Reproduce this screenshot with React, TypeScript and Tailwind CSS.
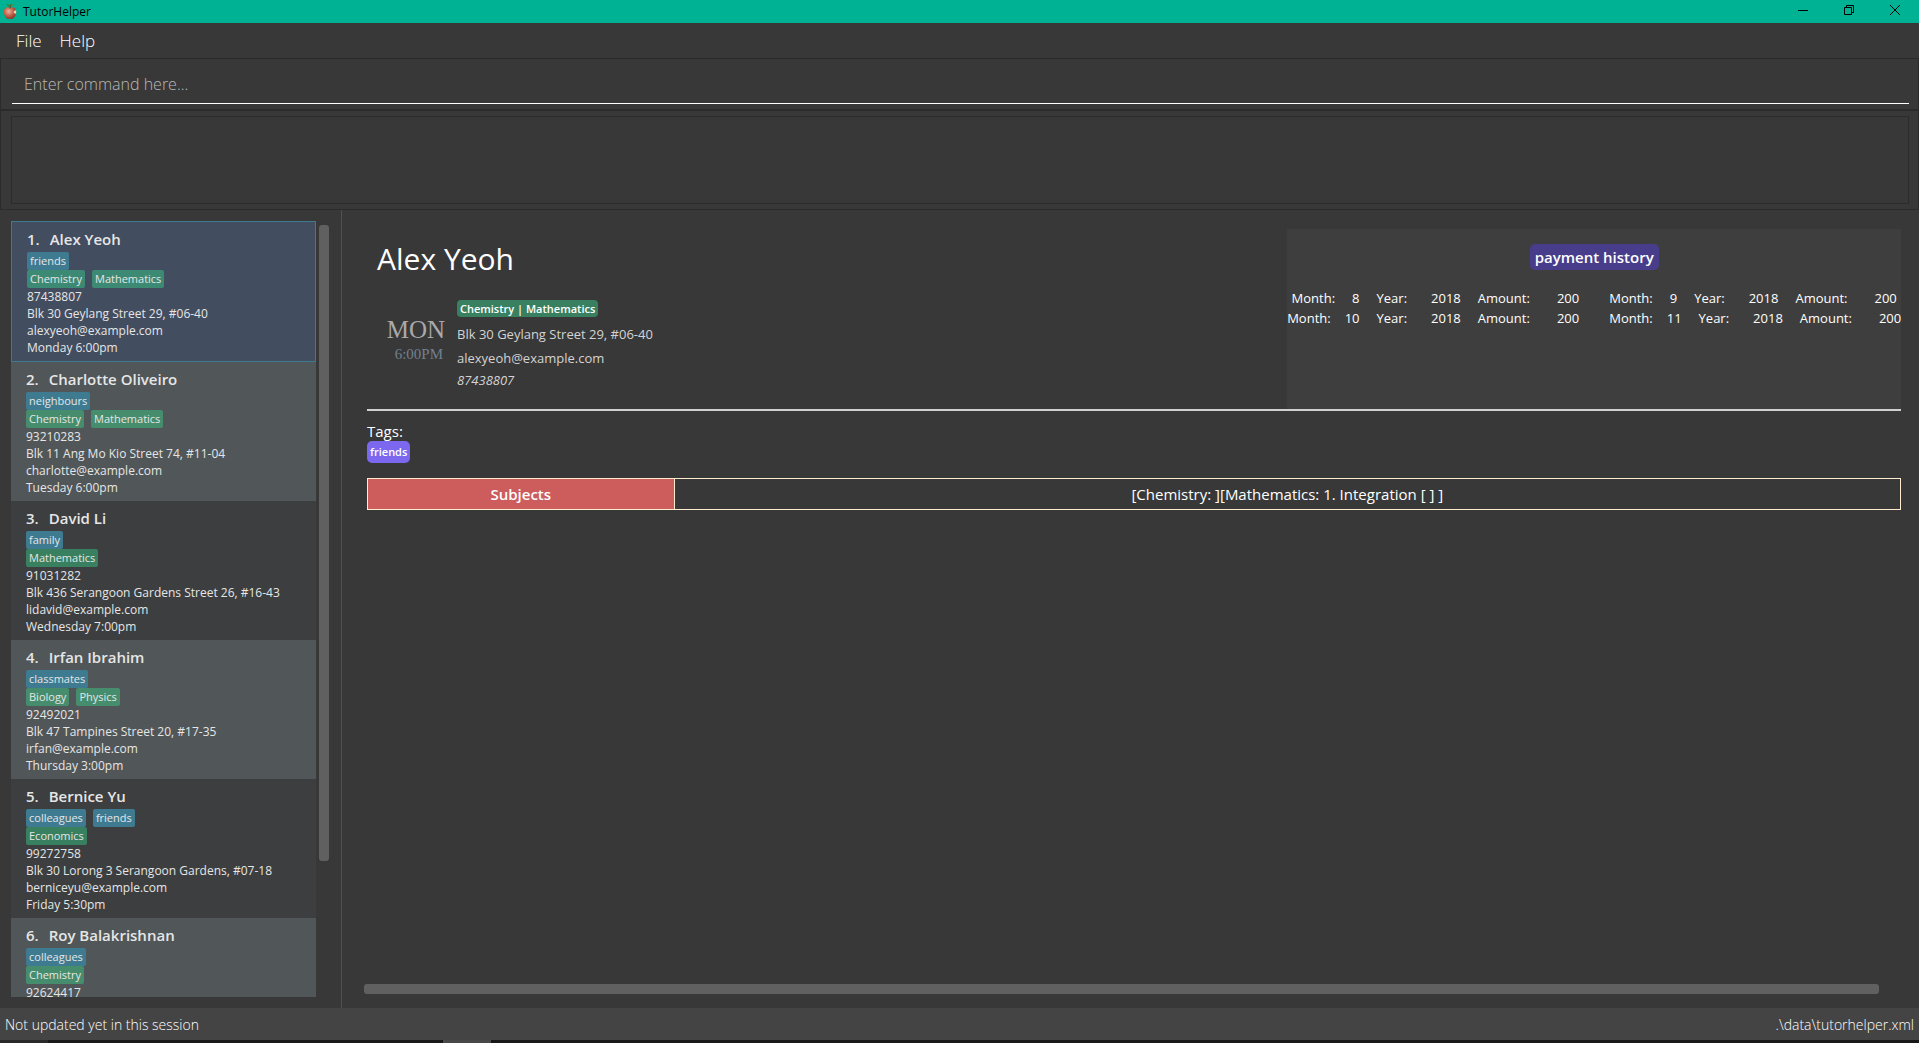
import React from "react";

type Student = {
  name: string;
  tags: string[];
  subjects: string[];
  phone: string;
  address?: string;
  email?: string;
  slot?: string;
};

type Payment = { month: number; year: number; amount: number };

const students: Student[] = [
  { name: "Alex Yeoh", tags: ["friends"], subjects: ["Chemistry", "Mathematics"], phone: "87438807", address: "Blk 30 Geylang Street 29, #06-40", email: "alexyeoh@example.com", slot: "Monday 6:00pm" },
  { name: "Charlotte Oliveiro", tags: ["neighbours"], subjects: ["Chemistry", "Mathematics"], phone: "93210283", address: "Blk 11 Ang Mo Kio Street 74, #11-04", email: "charlotte@example.com", slot: "Tuesday 6:00pm" },
  { name: "David Li", tags: ["family"], subjects: ["Mathematics"], phone: "91031282", address: "Blk 436 Serangoon Gardens Street 26, #16-43", email: "lidavid@example.com", slot: "Wednesday 7:00pm" },
  { name: "Irfan Ibrahim", tags: ["classmates"], subjects: ["Biology", "Physics"], phone: "92492021", address: "Blk 47 Tampines Street 20, #17-35", email: "irfan@example.com", slot: "Thursday 3:00pm" },
  { name: "Bernice Yu", tags: ["colleagues", "friends"], subjects: ["Economics"], phone: "99272758", address: "Blk 30 Lorong 3 Serangoon Gardens, #07-18", email: "berniceyu@example.com", slot: "Friday 5:30pm" },
  { name: "Roy Balakrishnan", tags: ["colleagues"], subjects: ["Chemistry"], phone: "92624417" },
];

const payments: Payment[][] = [
  [{ month: 8, year: 2018, amount: 200 }, { month: 9, year: 2018, amount: 200 }],
  [{ month: 10, year: 2018, amount: 200 }, { month: 11, year: 2018, amount: 200 }],
];

function AppleIcon() {
  return (
    <svg width="14" height="17" viewBox="0 0 14 17" aria-hidden="true">
      <defs>
        <radialGradient id="skin" cx="0.4" cy="0.35" r="0.75">
          <stop offset="0" stopColor="#eeb49c" />
          <stop offset="0.5" stopColor="#c0604a" />
          <stop offset="1" stopColor="#7e2a1e" />
        </radialGradient>
      </defs>
      <path d="M7 5C5 3.600 1 4 .8 8.600.7 12 3 16 5.200 16c.8 0 1-.3 1.800-.3s1 .3 1.800.3c2.200 0 4.500-4 4.400-7.400C13 4 9 3.600 7 5Z" fill="url(#skin)" />
      <path d="M13.200 7.300c-1.600.2-2.500 1-2.400 2 .1 1 1 1.500 2.300 1.300Z" fill="#f0d9b5" />
      <path d="M7 5.500C7 4 7.400 2.400 8.600 1" fill="none" stroke="#5a3a1c" strokeWidth="1" />
      <path d="M6.800 3.800C5.600 4 4 3 3.500 1.300 5.300.9 6.800 2 6.800 3.800Z" fill="#3f7d2a" />
      <path d="M7.600 3C8 1.500 9.500.8 11.300 1.200 10.700 2.800 9.300 3.600 7.600 3Z" fill="#4f9a35" />
    </svg>
  );
}

function TitleBar() {
  return (
    <header className="flex h-[23px] shrink-0 items-center bg-[#00b294] text-black">
      <div className="flex flex-1 items-center gap-[6px] pl-[3px]">
        <AppleIcon />
        <h1 className="text-[12px] leading-4">TutorHelper</h1>
      </div>
      <div className="flex h-full items-start pr-px">
        <button aria-label="Minimize" className="flex h-5 w-[46px] items-center justify-center">
          <svg width="10" height="10" viewBox="0 0 10 10"><path d="M0 5.500h10" stroke="#000" /></svg>
        </button>
        <button aria-label="Restore" className="flex h-5 w-[46px] items-center justify-center">
          <svg width="10" height="10" viewBox="0 0 10 10" fill="none" stroke="#000">
            <path d="M.5 2.500h7v7h-7zM2.500 2.500v-2h7v7h-2" />
          </svg>
        </button>
        <button aria-label="Close" className="flex h-5 w-[46px] items-center justify-center">
          <svg width="10" height="10" viewBox="0 0 10 10"><path d="M0 0l10 10M10 0L0 10" stroke="#000" /></svg>
        </button>
      </div>
    </header>
  );
}

function StudentCard({ student, index }: { student: Student; index: number }) {
  const selected = index === 0;
  const shade = selected
    ? "border border-[#3e7b91] bg-[#424d5f]"
    : index % 2 === 1
      ? "bg-[#515658]"
      : "bg-[#3c3e3f]";
  const subjectShade = selected ? "bg-[#3d8a74]" : index % 2 === 1 ? "bg-[#458d6d]" : "bg-[#38805f]";
  return (
    <li className={`shrink-0 px-[15px] pb-[5px] text-[12px] leading-[17px] text-[#e6e6e6] ${shade}`}>
      <h2 className="flex h-[30px] items-center gap-[10px] pt-1 text-[15px] font-semibold leading-5">
        <span>{index + 1}.</span>
        <span>{student.name}</span>
      </h2>
      <div className="flex gap-[7px]">
        {student.tags.map((tag) => (
          <span key={tag} className="h-[18px] rounded-[2px] bg-[#3e7b91] px-[3px] text-[11px] leading-[18px]">{tag}</span>
        ))}
      </div>
      <div className="flex gap-[7px]">
        {student.subjects.map((subject) => (
          <span key={subject} className={`h-[18px] rounded-[2px] px-[3px] text-[11px] leading-[18px] ${subjectShade}`}>{subject}</span>
        ))}
      </div>
      <p>{student.phone}</p>
      {student.address && <p>{student.address}</p>}
      {student.email && <p>{student.email}</p>}
      {student.slot && <p>{student.slot}</p>}
    </li>
  );
}

function PaymentEntry({ payment }: { payment: Payment }) {
  return (
    <td className="flex">
      <span>Month:</span>
      <span className={payment.month > 9 ? "ml-[14px]" : "ml-[17px]"}>{payment.month}</span>
      <span className="ml-[17px]">Year:</span>
      <span className="ml-6">{payment.year}</span>
      <span className="ml-[17px]">Amount:</span>
      <span className="ml-[27px]">{payment.amount}</span>
    </td>
  );
}

function StudentDetails() {
  return (
    <main className="flex min-w-0 flex-1 flex-col pt-[19px]">
      <div className="flex flex-1 flex-col pl-[25px] pr-[18px]">
        <section className="flex h-[182px] border-b-2 border-[#d0d0d0]">
          <div className="w-3/5 pl-[10px]">
            <h2 className="pt-2 text-[30px] leading-[44px] text-white">Alex Yeoh</h2>
            <div className="flex pt-[19px]">
              <div className="flex w-20 flex-col items-end pr-3 pt-4 font-['Liberation_Serif',serif]">
                <span className="text-[25px] leading-7 text-[#a9a9a9]">MON</span>
                <span className="pr-[2px] text-[15px] leading-5 text-[#708090]">6:00PM</span>
              </div>
              <div className="flex flex-col items-start text-[13px] text-[#d3d3d3]">
                <span className="h-[17px] rounded-[4px] bg-[#38805f] px-[3px] text-[11px] font-semibold leading-[17px] text-white">Chemistry | Mathematics</span>
                <span className="mt-2 leading-[18px]">Blk 30 Geylang Street 29, #06-40</span>
                <span className="mt-[6px] leading-[18px]">alexyeoh@example.com</span>
                <span className="mt-1 italic leading-[18px]">87438807</span>
              </div>
            </div>
          </div>
          <div className="flex w-2/5 flex-col items-center bg-[#3e3e3e] pt-[15px] text-white">
            <h3 className="h-[26px] rounded-[5px] bg-[#483d8b] px-[5px] text-[15px] font-semibold leading-[26px]">payment history</h3>
            <table className="mt-[18px] block text-[13px] leading-5">
              <tbody className="block">
                {payments.map((row, i) => (
                  <tr key={i} className="flex justify-center gap-[30px] whitespace-nowrap">
                    {row.map((payment) => <PaymentEntry key={payment.month} payment={payment} />)}
                  </tr>
                ))}
              </tbody>
            </table>
          </div>
        </section>
        <section className="flex flex-col items-start pt-[10px] text-white">
          <h3 className="text-[15px] leading-5">Tags:</h3>
          <span className="h-[22px] rounded-[5px] bg-[#7b68ee] px-[3px] text-[11px] font-semibold leading-[22px]">friends</span>
        </section>
        <table className="mt-[15px] w-full table-fixed border-collapse text-center text-[15px] leading-[30px] text-white">
          <tbody>
            <tr>
              <th scope="row" className="w-1/5 border border-[#ffebcd] bg-[#cd5c5c] font-semibold">Subjects</th>
              <td className="border border-[#ffebcd]">[Chemistry: ][Mathematics: 1. Integration [ ] ]</td>
            </tr>
          </tbody>
        </table>
      </div>
      <div className="mb-[14px] ml-[22px] mr-10 h-[10px] rounded-[3px] bg-[#606060]" />
    </main>
  );
}

export default function App() {
  return (
    <div className="flex h-screen flex-col overflow-hidden bg-[#383838] font-['Open_Sans',sans-serif]">
      <TitleBar />
      <nav className="flex h-[35px] shrink-0 items-center gap-[18px] px-4 text-[17px] font-light text-white">
        <button className="leading-6">File</button>
        <button className="leading-6">Help</button>
      </nav>
      <div className="border border-[#2b2b2b] pb-[5px] pl-[11px] pr-[9px] pt-[7px]">
        <input
          aria-label="Command"
          placeholder="Enter command here..."
          className="block h-[38px] w-full border-b border-white bg-transparent px-3 pb-[2px] text-[16px] font-light text-white outline-none placeholder:text-[#b8b8b8]"
        />
      </div>
      <div className="border border-[#2b2b2b] py-[5px] pl-[10px] pr-[9px]">
        <output aria-label="Result" className="block h-[88px] border border-[#2b2b2b]" />
      </div>
      <div className="flex min-h-0 flex-1">
        <aside className="flex w-[342px] shrink-0 border-r border-[#505050] pb-[11px] pl-[11px] pt-[11px]">
          <ul className="flex w-[305px] flex-col overflow-hidden">
            {students.map((student, i) => <StudentCard key={student.name} student={student} index={i} />)}
          </ul>
          <div className="ml-[3px] mt-1 h-[82%] w-[10px] rounded-[3px] bg-[#606060]" />
        </aside>
        <StudentDetails />
      </div>
      <footer className="flex h-8 shrink-0 items-center justify-between bg-[#444444] px-[5px] text-[14px] font-light text-white">
        <span>Not updated yet in this session</span>
        <span>.\data\tutorhelper.xml</span>
      </footer>
      <div className="flex h-[3px] shrink-0 bg-[#181818]">
        <div className="w-12 bg-[#2a2a2a]" />
        <div className="ml-[395px] w-12 bg-[#484848]" />
      </div>
    </div>
  );
}
